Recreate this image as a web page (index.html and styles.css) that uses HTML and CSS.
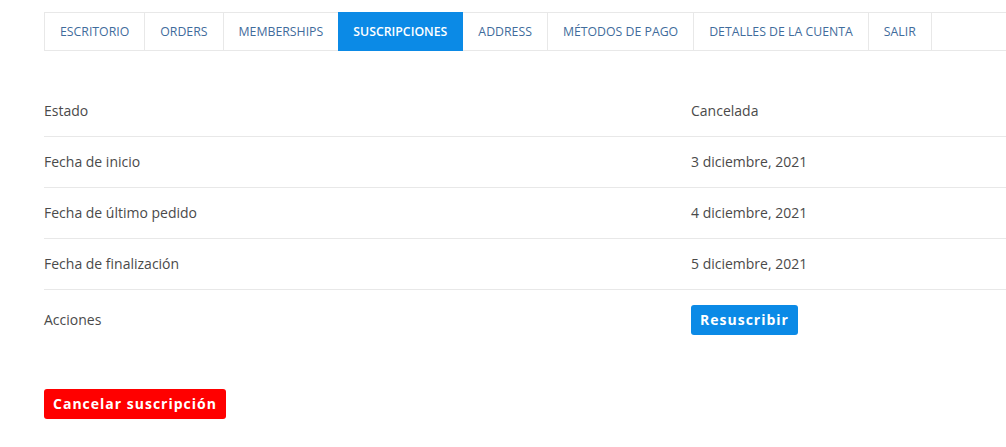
FILE: index.html
```html
<!DOCTYPE html>
<html lang="es">
<head>
    <meta charset="UTF-8">
    <meta name="viewport" content="width=device-width, initial-scale=1.0">
    <title>Suscripción</title>
    <link rel="stylesheet" href="styles.css">
</head>
<body>
    <div class="account">
        <nav class="tabs">
            <a class="tab" href="#">Escritorio</a>
            <a class="tab" href="#">Orders</a>
            <a class="tab" href="#">Memberships</a>
            <a class="tab active" href="#">Suscripciones</a>
            <a class="tab" href="#">Address</a>
            <a class="tab" href="#">Métodos de pago</a>
            <a class="tab" href="#">Detalles de la cuenta</a>
            <a class="tab" href="#">Salir</a>
        </nav>

        <table class="details">
            <tr>
                <td>Estado</td>
                <td>Cancelada</td>
            </tr>
            <tr>
                <td>Fecha de inicio</td>
                <td>3 diciembre, 2021</td>
            </tr>
            <tr>
                <td>Fecha de último pedido</td>
                <td>4 diciembre, 2021</td>
            </tr>
            <tr>
                <td>Fecha de finalización</td>
                <td>5 diciembre, 2021</td>
            </tr>
            <tr class="actions">
                <td>Acciones</td>
                <td><a class="btn btn-blue" href="#">Resuscribir</a></td>
            </tr>
        </table>

        <a class="btn btn-red" href="#">Cancelar suscripción</a>
    </div>
</body>
</html>
```

FILE: styles.css
```css
:root {
    --text-color: #4a4a4a;
    --tab-color: #3f6c9c;
    --line-color: #e8e8e8;
    --blue: #0b8ae6;
    --red: #ff0000;
}

body {
    font-family: 'Open Sans', 'Liberation Sans', sans-serif;
    margin: 0;
    padding: 0;
    background: #fff;
    color: var(--text-color);
}
.account {
    padding: 12px 0 0 44px;
}
.tabs {
    display: flex;
    border-top: 1px solid var(--line-color);
    border-bottom: 1px solid var(--line-color);
}
.tab {
    display: flex;
    align-items: center;
    height: 37px;
    padding: 0 15px;
    border-right: 1px solid var(--line-color);
    font-size: 12.3px;
    text-transform: uppercase;
    text-decoration: none;
    color: var(--tab-color);
}
.tab:first-child {
    border-left: 1px solid var(--line-color);
}
.tab.active {
    background: var(--blue);
    color: #fff;
    font-weight: 600;
    border-right-color: var(--blue);
    margin: -1px 0 -1px -1px;
    height: 39px;
}
.details {
    width: 100%;
    border-collapse: collapse;
    margin-top: 35px;
    font-size: 14px;
}
.details td {
    padding: 15px 0;
    line-height: 20px;
    border-bottom: 1px solid var(--line-color);
}
.details td:first-child {
    width: 647px;
}
.details tr:last-child td {
    border-bottom: none;
}
.details .actions td {
    height: 30px;
}
.btn {
    display: inline-block;
    height: 30px;
    line-height: 30px;
    padding: 0 9px;
    border-radius: 3px;
    color: #fff;
    font-size: 14px;
    font-weight: 700;
    letter-spacing: 1px;
    text-decoration: none;
}
.btn-blue {
    background: var(--blue);
}
.btn-red {
    background: var(--red);
    margin-top: 39px;
}
```
